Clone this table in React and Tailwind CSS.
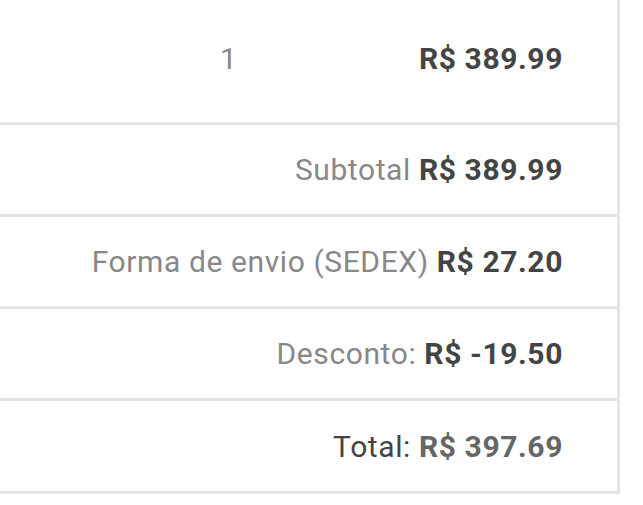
const rows = [
  { label: "Subtotal", value: "R$ 389.99" },
  { label: "Forma de envio (SEDEX)", value: "R$ 27.20" },
  { label: "Desconto:", value: "R$ -19.50" },
]

export default function App() {
  return (
    <div className="min-h-[505px] w-[643px] bg-white font-['Roboto',sans-serif] text-[30px] tracking-[0.6px] whitespace-nowrap">
      <div className="w-[620px] border-r-[3px] border-[#e4e4e4]">
        <div className="flex h-[125px] items-center border-b-[3px] border-[#e4e4e4] pb-[5px] pl-[220px] pr-[54px]">
          <span className="text-[#888888]">1</span>
          <span className="ml-auto font-bold text-[#444444]">R$ 389.99</span>
        </div>
        {rows.map((row, i) => (
          <div
            key={i}
            className="flex h-[92px] items-center justify-end border-b-[3px] border-[#e4e4e4] pr-[54px]"
          >
            <span className="text-[#888888]">{row.label}</span>
            <span className="ml-[8px] font-bold text-[#444444]">{row.value}</span>
          </div>
        ))}
        <div className="flex h-[93px] items-center justify-end border-b-[3px] border-[#e4e4e4] pr-[54px]">
          <span className="text-[#444444]">Total:</span>
          <span className="ml-[8px] font-bold text-[#666666]">R$ 397.69</span>
        </div>
      </div>
    </div>
  )
}
